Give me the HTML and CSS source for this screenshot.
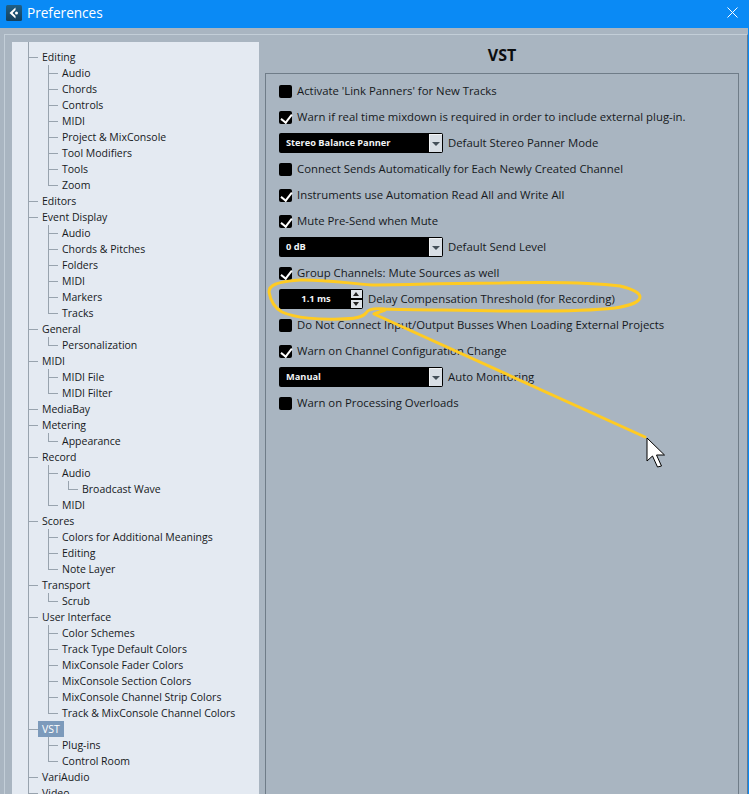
FILE: index.html
```html
<!DOCTYPE html>
<html lang="en">
<head>
  <meta charset="UTF-8">
  <title>Preferences</title>
  <link rel="stylesheet" href="styles.css">
</head>
<body>
  <div class="window">
    <header class="titlebar">
      <svg class="app-icon" width="16" height="16" viewBox="0 0 16 16">
        <defs>
          <linearGradient id="icon-bg" x1="0" y1="0" x2="0" y2="1">
            <stop offset="0" stop-color="#1f5f86"/>
            <stop offset="1" stop-color="#143f5c"/>
          </linearGradient>
        </defs>
        <rect width="16" height="16" rx="1.5" fill="url(#icon-bg)"/>
        <path d="M9.5 2.5 L3.5 8 L9.5 13.5 L9.5 11 L6.5 8 L9.5 5 Z" fill="#fff"/>
        <circle cx="10.5" cy="8" r="1.5" fill="#fff"/>
      </svg>
      <span class="title">Preferences</span>
      <svg class="close" width="11" height="11" viewBox="0 0 11 11">
        <path d="M.5 .5 L10.5 10.5 M10.5 .5 L.5 10.5" stroke="#fff" stroke-width="1" fill="none"/>
      </svg>
    </header>

    <div class="content">
      <nav class="tree">
        <ul>
          <li><span>Editing</span>
            <ul>
              <li><span>Audio</span></li>
              <li><span>Chords</span></li>
              <li><span>Controls</span></li>
              <li><span>MIDI</span></li>
              <li><span>Project &amp; MixConsole</span></li>
              <li><span>Tool Modifiers</span></li>
              <li><span>Tools</span></li>
              <li><span>Zoom</span></li>
            </ul>
          </li>
          <li><span>Editors</span></li>
          <li><span>Event Display</span>
            <ul>
              <li><span>Audio</span></li>
              <li><span>Chords &amp; Pitches</span></li>
              <li><span>Folders</span></li>
              <li><span>MIDI</span></li>
              <li><span>Markers</span></li>
              <li><span>Tracks</span></li>
            </ul>
          </li>
          <li><span>General</span>
            <ul>
              <li><span>Personalization</span></li>
            </ul>
          </li>
          <li><span>MIDI</span>
            <ul>
              <li><span>MIDI File</span></li>
              <li><span>MIDI Filter</span></li>
            </ul>
          </li>
          <li><span>MediaBay</span></li>
          <li><span>Metering</span>
            <ul>
              <li><span>Appearance</span></li>
            </ul>
          </li>
          <li><span>Record</span>
            <ul>
              <li><span>Audio</span>
                <ul>
                  <li><span>Broadcast Wave</span></li>
                </ul>
              </li>
              <li><span>MIDI</span></li>
            </ul>
          </li>
          <li><span>Scores</span>
            <ul>
              <li><span>Colors for Additional Meanings</span></li>
              <li><span>Editing</span></li>
              <li><span>Note Layer</span></li>
            </ul>
          </li>
          <li><span>Transport</span>
            <ul>
              <li><span>Scrub</span></li>
            </ul>
          </li>
          <li><span>User Interface</span>
            <ul>
              <li><span>Color Schemes</span></li>
              <li><span>Track Type Default Colors</span></li>
              <li><span>MixConsole Fader Colors</span></li>
              <li><span>MixConsole Section Colors</span></li>
              <li><span>MixConsole Channel Strip Colors</span></li>
              <li><span>Track &amp; MixConsole Channel Colors</span></li>
            </ul>
          </li>
          <li><span class="selected">VST</span>
            <ul>
              <li><span>Plug-ins</span></li>
              <li><span>Control Room</span></li>
            </ul>
          </li>
          <li><span>VariAudio</span></li>
          <li><span>Video</span></li>
        </ul>
      </nav>

      <main class="page">
        <h1>VST</h1>
        <section class="settings">
          <div class="row"><i class="check"></i>Activate 'Link Panners' for New Tracks</div>
          <div class="row"><i class="check on"></i>Warn if real time mixdown is required in order to include external plug-in.</div>
          <div class="row"><div class="select"><b>Stereo Balance Panner</b><i class="drop"></i></div>Default Stereo Panner Mode</div>
          <div class="row"><i class="check"></i>Connect Sends Automatically for Each Newly Created Channel</div>
          <div class="row"><i class="check on"></i>Instruments use Automation Read All and Write All</div>
          <div class="row"><i class="check on"></i>Mute Pre-Send when Mute</div>
          <div class="row"><div class="select"><b>0 dB</b><i class="drop"></i></div>Default Send Level</div>
          <div class="row"><i class="check on"></i>Group Channels: Mute Sources as well</div>
          <div class="row"><div class="spinner"><b>1.1 ms</b><span class="arrows"><i class="up"></i><i class="down"></i></span></div>Delay Compensation Threshold (for Recording)</div>
          <div class="row"><i class="check"></i>Do Not Connect Input/Output Busses When Loading External Projects</div>
          <div class="row"><i class="check on"></i>Warn on Channel Configuration Change</div>
          <div class="row"><div class="select"><b>Manual</b><i class="drop"></i></div>Auto Monitoring</div>
          <div class="row"><i class="check"></i>Warn on Processing Overloads</div>
        </section>
      </main>
    </div>

    <!-- hand drawn annotation on top of the screenshot -->
    <svg class="scribble" width="749" height="794" viewBox="0 0 749 794">
      <path class="ink" d="M270 288 C274 283 284 281 300 280 C320 279 345 283 372 285 C410 285 450 283 500 283 C540 282 590 282 620 286 C632 289 640 293 640 297 C640 302 632 305 615 308 C580 312 540 311 500 311 C460 310 420 310 385 309 C375 308 368 309 366 313 C363 317 355 319 340 319 C320 320 295 318 282 312 C273 307 270 298 269 292 C269 289 271 286 276 284"/>
      <path class="ink" d="M385 310 L374 314 L645 437"/>
      <path d="M647 438 L647 461 L652.5 456 L657.5 467 L661.5 466 L656.5 455 L664.5 455 Z" fill="#fff" stroke="#000" stroke-width="1"/>
    </svg>
  </div>
</body>
</html>
```

FILE: styles.css
```css
* {
  margin: 0;
  padding: 0;
  box-sizing: border-box;
}
html, body {
  width: 749px;
  height: 794px;
  overflow: hidden;
}
body {
  font: 11.35px/16px "Open Sans", "Noto Sans", sans-serif;
  color: #16191c;
  background: #a9b5c1;
}
ul {
  list-style: none;
}
.window {
  position: relative;
  display: flex;
  flex-direction: column;
  height: 794px;
  overflow: hidden;
  border-right: 1px solid #0a8af5;
}

/* title bar */
.titlebar {
  display: flex;
  align-items: center;
  flex: none;
  height: 28px;
  margin-right: -1px;
  padding: 0 11px 3px 6px;
  background: #0a8af5;
  color: #fff;
}
.app-icon {
  flex: none;
}
.title {
  margin-left: 5px;
  font-size: 13.6px;
}
.close {
  margin-left: auto;
}

/* body of the dialog */
.content {
  display: flex;
  flex: 1;
  min-height: 0;
  gap: 6px;
  margin: 6px 0 0 4px;
  padding: 7px 8px 0 7px;
  border-top: 1px solid #c3ced8;
  border-left: 1px solid #c3ced8;
  border-right: 1px solid #627a92;
}

/* left tree */
.tree {
  flex: none;
  width: 247px;
  overflow: hidden;
  padding-left: 30px;
  font-size: 10.5px;
  background: #e4eaf2;
}
.tree > ul {
  padding-top: 7px;
}
.tree ul {
  position: relative;
}
.tree ul::before {
  content: '';
  position: absolute;
  top: 0;
  bottom: 8px;
  left: -14px;
  width: 1px;
  background: #98a3ae;
}
.tree > ul::before {
  bottom: 0;
}
.tree li ul {
  margin-left: 20px;
}
.tree li {
  position: relative;
}
.tree li > span {
  position: relative;
  display: inline-block;
  vertical-align: top;
  height: 16px;
  white-space: nowrap;
}
.tree li > span::before {
  content: '';
  position: absolute;
  top: 8px;
  left: -14px;
  width: 10px;
  height: 1px;
  background: #98a3ae;
}
.tree li > span.selected {
  min-width: 26px;
  margin-left: -4px;
  padding: 0 4px;
  color: #fff;
  background: #7c9abb;
}
.tree li > span.selected::before {
  left: -10px;
}

/* right page */
.page {
  flex: 1;
  min-width: 0;
  overflow: hidden;
}
.page h1 {
  height: 31px;
  font-size: 16px;
  line-height: 26px;
  text-align: center;
  font-weight: 700;
  color: #0b0d0f;
}
.settings {
  height: 800px;
  padding: 4px 13px;
  border: 1px solid #6f7c88;
  border-bottom: none;
}
.row {
  display: flex;
  align-items: center;
  height: 26px;
  white-space: nowrap;
}
.check {
  position: relative;
  flex: none;
  width: 13px;
  height: 13px;
  margin-right: 5px;
  border-radius: 2px;
  background: #000;
}
.check.on::after {
  content: '';
  position: absolute;
  top: 1px;
  left: 4px;
  width: 5px;
  height: 9px;
  border: solid #fff;
  border-width: 0 2px 2px 0;
  transform: rotate(38deg);
}
.select, .spinner {
  display: flex;
  align-items: center;
  flex: none;
  height: 20px;
  margin-right: 5px;
  border-radius: 2px;
  color: #f2f4f6;
  background: #000;
  font-size: 9.25px;
}
.select {
  width: 164px;
  padding: 0 1px 0 7px;
}
.select b {
  flex: 1;
}
.drop {
  position: relative;
  flex: none;
  width: 13px;
  height: 18px;
  background: #d8dee5;
  border-top: 1px solid #f2f4f6;
  border-left: 1px solid #f2f4f6;
}
.drop::after {
  content: '';
  position: absolute;
  top: 7px;
  left: 2px;
  border: 4px solid transparent;
  border-top: 4px solid #45505a;
  border-bottom: none;
}
.spinner {
  width: 84px;
}
.spinner b {
  flex: 1;
  padding-left: 2px;
  text-align: center;
}
.arrows {
  display: flex;
  flex-direction: column;
  flex: none;
  gap: 2px;
  width: 11px;
  height: 18px;
  margin-right: 1px;
}
.arrows i {
  position: relative;
  flex: 1;
  background: #dfe4ea;
}
.arrows i::after {
  content: '';
  position: absolute;
  left: 2px;
  border: 3.5px solid transparent;
}
.arrows .up::after {
  top: 2px;
  border-bottom: 4px solid #222;
  border-top: none;
}
.arrows .down::after {
  top: 2px;
  border-top: 4px solid #222;
  border-bottom: none;
}

/* annotation layer */
.scribble {
  position: absolute;
  top: 0;
  left: 0;
  pointer-events: none;
}
.ink {
  fill: none;
  stroke: #ffcb22;
  stroke-width: 3;
  stroke-linecap: round;
  stroke-linejoin: round;
}
```
